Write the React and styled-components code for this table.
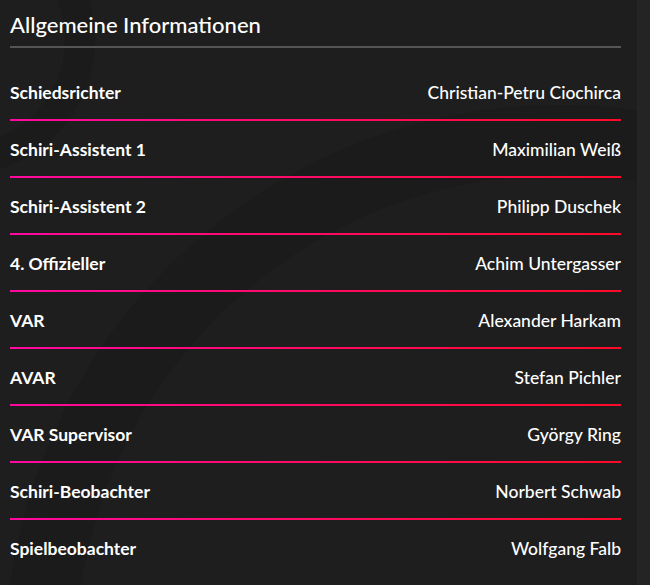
import React from 'react';
import styled, { createGlobalStyle } from 'styled-components';

const GlobalStyle = createGlobalStyle`
  html, body {
    margin: 0;
    padding: 0;
    background: #1e1e1e;
  }
  body {
    font-family: Lato, "Open Sans", sans-serif;
    color: #fff;
    -webkit-font-smoothing: antialiased;
  }
`;

const Page = styled.div`
  display: flex;
  width: 650px;
  height: 585px;
  overflow: hidden;
`;

const Panel = styled.section`
  position: relative;
  flex: 1;
  padding: 0 16px 0 10px;
  background: #1e1e1e;
  overflow: hidden;
`;

const Scrollbar = styled.div`
  width: 13px;
  background: #242424;
`;

const Watermark = styled.svg`
  position: absolute;
  inset: 0;
  width: 100%;
  height: 100%;
  pointer-events: none;
`;

const Content = styled.div`
  position: relative;
`;

const Title = styled.h2`
  margin: 0 0 16px;
  padding: 12px 0 8px;
  font-size: 22px;
  line-height: 26px;
  font-weight: 500;
  border-bottom: 2px solid #555;
`;

const List = styled.dl`
  margin: 0;
`;

const Row = styled.div`
  position: relative;
  display: flex;
  align-items: center;
  justify-content: space-between;
  height: 55px;
  padding-top: 1px;
  box-sizing: border-box;
  margin-bottom: ${p => (p.$last ? 0 : 2)}px;

  &::after {
    content: '';
    display: ${p => (p.$last ? 'none' : 'block')};
    position: absolute;
    left: 0;
    right: 0;
    bottom: -2px;
    height: 2px;
    background: linear-gradient(90deg, #ff0aa0 0%, #ff0a28 100%);
  }
`;

const Label = styled.dt`
  font-size: 17.5px;
  font-weight: 700;
`;

const Value = styled.dd`
  margin: 0;
  font-size: 17.5px;
  font-weight: 500;
`;

const officials = [
  ['Schiedsrichter', 'Christian-Petru Ciochirca'],
  ['Schiri-Assistent 1', 'Maximilian Weiß'],
  ['Schiri-Assistent 2', 'Philipp Duschek'],
  ['4. Offizieller', 'Achim Untergasser'],
  ['VAR', 'Alexander Harkam'],
  ['AVAR', 'Stefan Pichler'],
  ['VAR Supervisor', 'György Ring'],
  ['Schiri-Beobachter', 'Norbert Schwab'],
  ['Spielbeobachter', 'Wolfgang Falb'],
];

export default function App() {
  return (
    <>
      <GlobalStyle />
      <Page>
        <Panel>
          <Watermark viewBox="0 0 637 585">
            <circle cx="560" cy="660" r="520" fill="none" stroke="#1b1b1b" strokeWidth="70" />
            <circle cx="-40" cy="40" r="120" fill="none" stroke="#1b1b1b" strokeWidth="30" />
          </Watermark>
          <Content>
            <Title>Allgemeine Informationen</Title>
            <List>
              {officials.map(([role, name], i) => (
                <Row key={role} $last={i === officials.length - 1}>
                  <Label>{role}</Label>
                  <Value>{name}</Value>
                </Row>
              ))}
            </List>
          </Content>
        </Panel>
        <Scrollbar />
      </Page>
    </>
  );
}
